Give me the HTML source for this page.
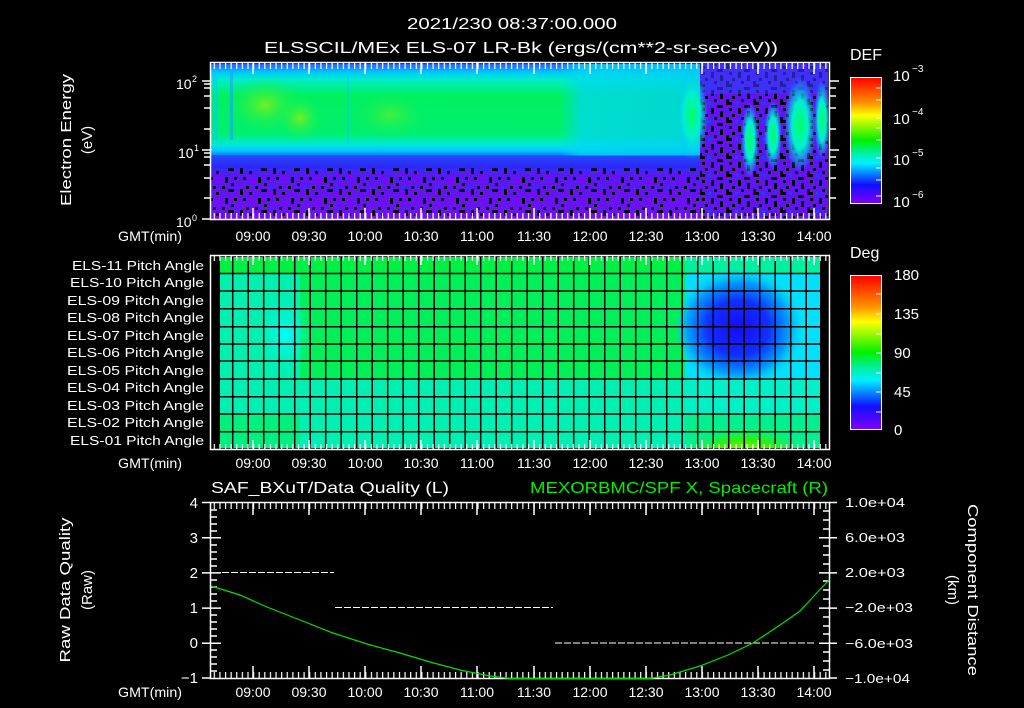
<!DOCTYPE html>
<html><head><meta charset="utf-8"><style>
html,body{margin:0;padding:0;background:#000;width:1024px;height:708px;overflow:hidden}
svg{display:block}
text{font-family:"Liberation Sans",sans-serif;fill:#fff}
</style></head><body>
<svg width="1024" height="708" viewBox="0 0 1024 708" xmlns="http://www.w3.org/2000/svg">
<defs>
<clipPath id="midclip"><rect x="220" y="257" width="600" height="191"/></clipPath>
<clipPath id="topclip"><rect x="211" y="63" width="618" height="156"/></clipPath>
<linearGradient id="spv" x1="0" y1="0" x2="0" y2="1">
<stop offset="0" stop-color="#2a5cff"/><stop offset="0.05" stop-color="#00c4ff"/>
<stop offset="0.1" stop-color="#00eec8"/><stop offset="0.2" stop-color="#00f060"/>
<stop offset="0.45" stop-color="#00f070"/><stop offset="0.52" stop-color="#00e8d8"/>
<stop offset="0.56" stop-color="#00c8ff"/><stop offset="0.6" stop-color="#1e5cff"/>
<stop offset="0.66" stop-color="#2a30ff"/><stop offset="0.72" stop-color="#5a18f0"/>
<stop offset="1" stop-color="#7010f0"/></linearGradient>
<linearGradient id="cyanh" x1="0" y1="0" x2="1" y2="0">
<stop offset="0" stop-color="#00d8f0" stop-opacity="0"/><stop offset="0.15" stop-color="#00d8f0" stop-opacity="0.75"/>
<stop offset="1" stop-color="#00d0f0" stop-opacity="0.75"/></linearGradient>
<pattern id="noise" width="33" height="21" patternUnits="userSpaceOnUse">
<rect x="0" y="0" width="3" height="3" fill="#000"/><rect x="9" y="0" width="3" height="6" fill="#000"/>
<rect x="18" y="3" width="3" height="3" fill="#000"/><rect x="3" y="9" width="3" height="3" fill="#000"/>
<rect x="12" y="9" width="3" height="3" fill="#000"/><rect x="27" y="9" width="3" height="6" fill="#000"/>
<rect x="0" y="15" width="3" height="3" fill="#000"/><rect x="15" y="18" width="3" height="3" fill="#000"/>
<rect x="21" y="12" width="3" height="3" fill="#8a00ff"/><rect x="6" y="3" width="3" height="3" fill="#8a00ff"/>
<rect x="30" y="0" width="3" height="3" fill="#000"/><rect x="24" y="18" width="3" height="3" fill="#000"/>
<rect x="6" y="18" width="3" height="3" fill="#3030ff"/><rect x="18" y="6" width="3" height="3" fill="#8000ff"/>
</pattern>
<pattern id="noise2" width="27" height="18" patternUnits="userSpaceOnUse">
<rect width="27" height="18" fill="#6014f0"/>
<rect x="0" y="0" width="3" height="3" fill="#000"/><rect x="9" y="0" width="3" height="6" fill="#000"/>
<rect x="18" y="3" width="3" height="6" fill="#000"/><rect x="3" y="6" width="3" height="3" fill="#000"/>
<rect x="12" y="9" width="3" height="3" fill="#000"/><rect x="24" y="9" width="3" height="6" fill="#000"/>
<rect x="0" y="12" width="3" height="3" fill="#000"/><rect x="15" y="15" width="6" height="3" fill="#000"/>
<rect x="21" y="12" width="3" height="3" fill="#8a00ff"/><rect x="6" y="12" width="3" height="3" fill="#2040ff"/>
</pattern>
<linearGradient id="cbar" x1="0" y1="0" x2="0" y2="1">
<stop offset="0" stop-color="#ff0000"/><stop offset="0.2" stop-color="#ff9000"/>
<stop offset="0.3" stop-color="#ffff00"/><stop offset="0.5" stop-color="#00f000"/>
<stop offset="0.6" stop-color="#00f0a0"/><stop offset="0.68" stop-color="#00f0ff"/>
<stop offset="0.85" stop-color="#1010ff"/><stop offset="1" stop-color="#8000ff"/></linearGradient>
<radialGradient id="blob" cx="0.45" cy="0.5" r="0.5">
<stop offset="0" stop-color="#1808ff"/><stop offset="0.45" stop-color="#1030ff"/>
<stop offset="0.75" stop-color="#00a0ff"/><stop offset="1" stop-color="#00f0e0" stop-opacity="0"/></radialGradient>
<radialGradient id="cyb" cx="0.5" cy="0.5" r="0.5">
<stop offset="0" stop-color="#00ffff"/><stop offset="1" stop-color="#00f0c0" stop-opacity="0"/></radialGradient>
<radialGradient id="yg" cx="0.5" cy="0.8" r="0.6">
<stop offset="0" stop-color="#b0ff00"/><stop offset="0.5" stop-color="#30f000"/><stop offset="1" stop-color="#00f0a0" stop-opacity="0"/></radialGradient>
<radialGradient id="gb" cx="0.5" cy="0.5" r="0.5">
<stop offset="0" stop-color="#00ff60"/><stop offset="0.5" stop-color="#00f0d0"/><stop offset="1" stop-color="#00c0ff" stop-opacity="0"/></radialGradient>
<radialGradient id="lg" cx="0.5" cy="0.5" r="0.5">
<stop offset="0" stop-color="#70f020"/><stop offset="1" stop-color="#00f060" stop-opacity="0"/></radialGradient>
<pattern id="tx" x="253" width="5.61" height="20" patternUnits="userSpaceOnUse"><rect x="0" y="0" width="1.2" height="20" fill="#fff"/></pattern>
</defs>

<text x="512" y="29" font-size="16" text-anchor="middle" textLength="210" lengthAdjust="spacingAndGlyphs">2021/230 08:37:00.000</text>
<text x="521" y="53" font-size="16" text-anchor="middle" textLength="514" lengthAdjust="spacingAndGlyphs">ELSSCIL/MEx ELS-07 LR-Bk  (ergs/(cm**2-sr-sec-eV))</text>

<!-- TOP PANEL -->
<g clip-path="url(#topclip)">
<rect x="211" y="64" width="617" height="155" fill="url(#spv)"/>
<ellipse cx="265" cy="105" rx="40" ry="30" fill="url(#lg)"/>
<ellipse cx="300" cy="118" rx="25" ry="25" fill="url(#lg)"/>
<ellipse cx="390" cy="115" rx="40" ry="25" fill="url(#lg)" opacity="0.6"/>
<rect x="213" y="70" width="4" height="70" fill="#00c8ff" opacity="0.6"/>
<rect x="230" y="70" width="3" height="70" fill="#20a0ff" opacity="0.6"/>
<rect x="347" y="64" width="2" height="80" fill="#00c8ff" opacity="0.5"/>
<rect x="560" y="64" width="140" height="92" fill="url(#cyanh)"/>
<rect x="211" y="168" width="617" height="51" fill="url(#noise)"/>
<rect x="211" y="155" width="617" height="14" fill="#3020f0" opacity="0.35"/>
<rect x="700" y="64" width="128" height="155" fill="url(#noise2)"/>
<rect x="700" y="64" width="128" height="30" fill="#3040ff" opacity="0.6"/>
<ellipse cx="692" cy="115" rx="16" ry="45" fill="url(#gb)"/>
<ellipse cx="750" cy="140" rx="9" ry="38" fill="url(#gb)"/>
<ellipse cx="773" cy="135" rx="9" ry="35" fill="url(#gb)"/>
<ellipse cx="800" cy="125" rx="16" ry="48" fill="url(#gb)"/>
<ellipse cx="822" cy="120" rx="8" ry="40" fill="url(#gb)"/>
</g>
<rect x="210.5" y="62.5" width="619" height="157" fill="none" stroke="#fff" stroke-width="1.5"/>
<rect x="211" y="63" width="618" height="6" fill="url(#tx)"/>
<rect x="211" y="213" width="618" height="6" fill="url(#tx)"/>
<g stroke="#fff" stroke-width="1.5">
<path d="M253 63v11M309 63v11M365 63v11M421 63v11M477 63v11M534 63v11M590 63v11M646 63v11M702 63v11M758 63v11M814 63v11"/>
<path d="M253 219v-11M309 219v-11M365 219v-11M421 219v-11M477 219v-11M534 219v-11M590 219v-11M646 219v-11M702 219v-11M758 219v-11M814 219v-11"/>
<path d="M202 81h8M202 150h8M202 219h8M204 129h6M204 108h6M204 96h6M204 88h6M204 84h6M204 198h6M204 178h6M204 165h6M204 157h6M204 153h6"/>
<path d="M829 81h10M829 150h10M829 129h7M829 108h7M829 96h7M829 88h7M829 198h7M829 178h7M829 165h7M829 157h7"/>
</g>
<text x="176" y="89" font-size="14">10</text><text x="192" y="82" font-size="9">2</text>
<text x="178" y="158" font-size="14">10</text><text x="194" y="151" font-size="9">1</text>
<text x="176" y="227" font-size="14">10</text><text x="192" y="221" font-size="9">0</text>
<text transform="translate(71,140) rotate(-90)" font-size="15" text-anchor="middle" textLength="132" lengthAdjust="spacingAndGlyphs">Electron Energy</text>
<text transform="translate(92,140) rotate(-90)" font-size="15" text-anchor="middle">(eV)</text>

<g font-size="14" text-anchor="middle">
<text x="150" y="241" textLength="64" lengthAdjust="spacingAndGlyphs">GMT(min)</text>
<text x="253" y="241">09:00</text><text x="309" y="241">09:30</text><text x="365" y="241">10:00</text><text x="421" y="241">10:30</text><text x="477" y="241">11:00</text><text x="534" y="241">11:30</text><text x="590" y="241">12:00</text><text x="646" y="241">12:30</text><text x="702" y="241">13:00</text><text x="758" y="241">13:30</text><text x="814" y="241">14:00</text>
<text x="150" y="468" textLength="64" lengthAdjust="spacingAndGlyphs">GMT(min)</text>
<text x="253" y="468">09:00</text><text x="309" y="468">09:30</text><text x="365" y="468">10:00</text><text x="421" y="468">10:30</text><text x="477" y="468">11:00</text><text x="534" y="468">11:30</text><text x="590" y="468">12:00</text><text x="646" y="468">12:30</text><text x="702" y="468">13:00</text><text x="758" y="468">13:30</text><text x="814" y="468">14:00</text>
<text x="150" y="697" textLength="64" lengthAdjust="spacingAndGlyphs">GMT(min)</text>
<text x="253" y="697">09:00</text><text x="309" y="697">09:30</text><text x="365" y="697">10:00</text><text x="421" y="697">10:30</text><text x="477" y="697">11:00</text><text x="534" y="697">11:30</text><text x="590" y="697">12:00</text><text x="646" y="697">12:30</text><text x="702" y="697">13:00</text><text x="758" y="697">13:30</text><text x="814" y="697">14:00</text>
</g>

<text x="850" y="60" font-size="16" textLength="32" lengthAdjust="spacingAndGlyphs">DEF</text>
<rect x="850.5" y="77.5" width="31" height="126" fill="url(#cbar)" stroke="#fff"/>
<g font-size="15"><text x="893" y="81">10</text><text x="912" y="72" font-size="10">−3</text>
<text x="893" y="124">10</text><text x="912" y="115" font-size="10">−4</text>
<text x="893" y="165">10</text><text x="912" y="156" font-size="10">−5</text>
<text x="893" y="207">10</text><text x="912" y="198" font-size="10">−6</text></g>
<text x="850" y="258" font-size="16">Deg</text>
<rect x="850.5" y="275.5" width="31" height="154" fill="url(#cbar)" stroke="#fff"/>
<g font-size="15"><text x="894" y="280">180</text><text x="894" y="319">135</text><text x="894" y="358">90</text><text x="894" y="397">45</text><text x="894" y="435">0</text></g>
<g stroke="#fff"><path d="M876 118h5M876 158h5M876 196h5M876 88h5M876 128h5M876 168h5M876 100h5M876 140h5M876 180h5M876 314h5M876 353h5M876 392h5M876 294h5M876 334h5M876 373h5M876 412h5"/></g>

<!-- MIDDLE PANEL -->
<rect x="211" y="256" width="618" height="193" fill="#000"/>
<g clip-path="url(#midclip)">
<rect x="220" y="257" width="600" height="17" fill="#00f044"/>
<rect x="220" y="274" width="600" height="105" fill="#00f05a"/>
<rect x="220" y="379" width="600" height="69" fill="#00f0b4"/>
<rect x="220" y="274" width="80" height="105" fill="#00f0b0"/>
<ellipse cx="285" cy="335" rx="28" ry="42" fill="url(#cyb)"/>
<rect x="220" y="414" width="80" height="34" fill="#00f080"/>
<rect x="685" y="257" width="135" height="17" fill="#00f0a0"/>
<rect x="685" y="274" width="135" height="105" fill="#00e0ff"/>
<ellipse cx="745" cy="328" rx="68" ry="62" fill="url(#blob)"/>
<rect x="685" y="379" width="135" height="35" fill="#00f0c8"/>
<rect x="685" y="414" width="135" height="34" fill="#00f090"/>
<ellipse cx="745" cy="440" rx="60" ry="28" fill="url(#yg)"/>
</g>
<g stroke="#000" stroke-width="1.5">
<path d="M220 273.5h600M220 291h600M220 308.7h600M220 326.7h600M220 344h600M220 361h600M220 379h600M220 396.7h600M220 414h600M220 431.7h600"/>
<path d="M232.7 257v191M248.2 257v191M263.7 257v191M279.2 257v191M294.7 257v191M310.2 257v191M325.7 257v191M341.2 257v191M356.7 257v191M372.2 257v191M387.7 257v191M403.2 257v191M418.7 257v191M434.2 257v191M449.7 257v191M465.2 257v191M480.7 257v191M496.2 257v191M511.7 257v191M527.2 257v191M542.7 257v191M558.2 257v191M573.7 257v191M589.2 257v191M604.7 257v191M620.2 257v191M635.7 257v191M651.2 257v191M666.7 257v191M682.2 257v191M697.7 257v191M713.2 257v191M728.7 257v191M744.2 257v191M759.7 257v191M775.2 257v191M790.7 257v191M806.2 257v191"/>
</g>
<rect x="210.5" y="255.5" width="619" height="194" fill="none" stroke="#fff" stroke-width="1.5"/>
<rect x="211" y="256" width="618" height="5" fill="url(#tx)"/>
<rect x="211" y="444" width="618" height="5" fill="url(#tx)"/>
<g stroke="#fff" stroke-width="1.5">
<path d="M253 256v9M309 256v9M365 256v9M421 256v9M477 256v9M534 256v9M590 256v9M646 256v9M702 256v9M758 256v9M814 256v9"/>
<path d="M253 449v-9M309 449v-9M365 449v-9M421 449v-9M477 449v-9M534 449v-9M590 449v-9M646 449v-9M702 449v-9M758 449v-9M814 449v-9"/>
</g>
<g font-size="13" text-anchor="end">
<text x="204" y="270" textLength="132" lengthAdjust="spacingAndGlyphs">ELS-11 Pitch Angle</text>
<text x="204" y="287" textLength="134" lengthAdjust="spacingAndGlyphs">ELS-10 Pitch Angle</text>
<text x="204" y="305" textLength="137" lengthAdjust="spacingAndGlyphs">ELS-09 Pitch Angle</text>
<text x="204" y="322" textLength="137" lengthAdjust="spacingAndGlyphs">ELS-08 Pitch Angle</text>
<text x="204" y="340" textLength="137" lengthAdjust="spacingAndGlyphs">ELS-07 Pitch Angle</text>
<text x="204" y="357" textLength="137" lengthAdjust="spacingAndGlyphs">ELS-06 Pitch Angle</text>
<text x="204" y="375" textLength="137" lengthAdjust="spacingAndGlyphs">ELS-05 Pitch Angle</text>
<text x="204" y="392" textLength="137" lengthAdjust="spacingAndGlyphs">ELS-04 Pitch Angle</text>
<text x="204" y="410" textLength="137" lengthAdjust="spacingAndGlyphs">ELS-03 Pitch Angle</text>
<text x="204" y="427" textLength="137" lengthAdjust="spacingAndGlyphs">ELS-02 Pitch Angle</text>
<text x="204" y="445" textLength="134" lengthAdjust="spacingAndGlyphs">ELS-01 Pitch Angle</text>
</g>

<!-- BOTTOM PANEL -->
<text x="211" y="493" font-size="16" textLength="238" lengthAdjust="spacingAndGlyphs">SAF_BXuT/Data Quality (L)</text>
<text x="530" y="493" font-size="16" style="fill:#00f000" textLength="298" lengthAdjust="spacingAndGlyphs">MEXORBMC/SPF X, Spacecraft (R)</text>
<rect x="210.5" y="502.5" width="619" height="176" fill="none" stroke="#fff" stroke-width="1.5"/>
<rect x="211" y="503" width="618" height="6" fill="url(#tx)"/>
<rect x="211" y="672" width="618" height="6" fill="url(#tx)"/>
<g stroke="#fff" stroke-width="1.5">
<path d="M253 503v12M309 503v12M365 503v12M421 503v12M477 503v12M534 503v12M590 503v12M646 503v12M702 503v12M758 503v12M814 503v12"/>
<path d="M253 678v-12M309 678v-12M365 678v-12M421 678v-12M477 678v-12M534 678v-12M590 678v-12M646 678v-12M702 678v-12M758 678v-12M814 678v-12"/>
<path d="M202 502.5h8M202 537.7h8M202 572.9h8M202 608.1h8M202 643.3h8M202 678h8"/>
<path d="M211 510h6M211 517h6M211 524h6M211 531h6M211 545h6M211 552h6M211 559h6M211 566h6M211 580h6M211 587h6M211 594h6M211 601h6M211 615h6M211 622h6M211 629h6M211 636h6M211 650h6M211 657h6M211 664h6M211 671h6"/>
<path d="M211 537.7h10M211 572.9h10M211 608.1h10M211 643.3h10"/>
<path d="M829 502.5h8M829 537.7h8M829 572.9h8M829 608.1h8M829 643.3h8M829 678h8"/>
<path d="M829 511h-6M829 520h-6M829 529h-6M829 546h-6M829 555h-6M829 564h-6M829 581h-6M829 590h-6M829 599h-6M829 617h-6M829 626h-6M829 634h-6M829 652h-6M829 661h-6M829 670h-6"/>
<path d="M829 537.7h-10M829 572.9h-10M829 608.1h-10M829 643.3h-10"/>
</g>
<g stroke="#fff" stroke-width="1" stroke-dasharray="7,2">
<path d="M222 572.5h112M335 607.5h218M555 643h261"/>
</g>
<polyline fill="none" stroke="#00e000" stroke-width="1.2" points="211,586 240,595 267,607 300,620 333,633 367,644 400,653 430,662 460,670 490,676 510,678.5 650,678.5 670,675 700,666 728,655 753,643 783,623 800,611 813,597 827,582 829,580"/>
<g font-size="15" text-anchor="end">
<text x="198" y="508">4</text><text x="198" y="543">3</text><text x="198" y="578">2</text><text x="198" y="613">1</text><text x="198" y="648">0</text><text x="198" y="683">−1</text>
</g>
<g font-size="13">
<text x="845" y="507" textLength="60" lengthAdjust="spacingAndGlyphs">1.0e+04</text>
<text x="845" y="542" textLength="60" lengthAdjust="spacingAndGlyphs">6.0e+03</text>
<text x="845" y="577" textLength="60" lengthAdjust="spacingAndGlyphs">2.0e+03</text>
<text x="845" y="612" textLength="68" lengthAdjust="spacingAndGlyphs">−2.0e+03</text>
<text x="845" y="648" textLength="68" lengthAdjust="spacingAndGlyphs">−6.0e+03</text>
<text x="845" y="683" textLength="65" lengthAdjust="spacingAndGlyphs">−1.0e+04</text>
</g>
<text transform="translate(70,590) rotate(-90)" font-size="15" text-anchor="middle" textLength="145" lengthAdjust="spacingAndGlyphs">Raw Data Quality</text>
<text transform="translate(92,590) rotate(-90)" font-size="15" text-anchor="middle">(Raw)</text>
<text transform="translate(968,590) rotate(90)" font-size="15" text-anchor="middle" textLength="172" lengthAdjust="spacingAndGlyphs">Component Distance</text>
<text transform="translate(948,590) rotate(90)" font-size="15" text-anchor="middle">(km)</text>
</svg>
</body></html>
